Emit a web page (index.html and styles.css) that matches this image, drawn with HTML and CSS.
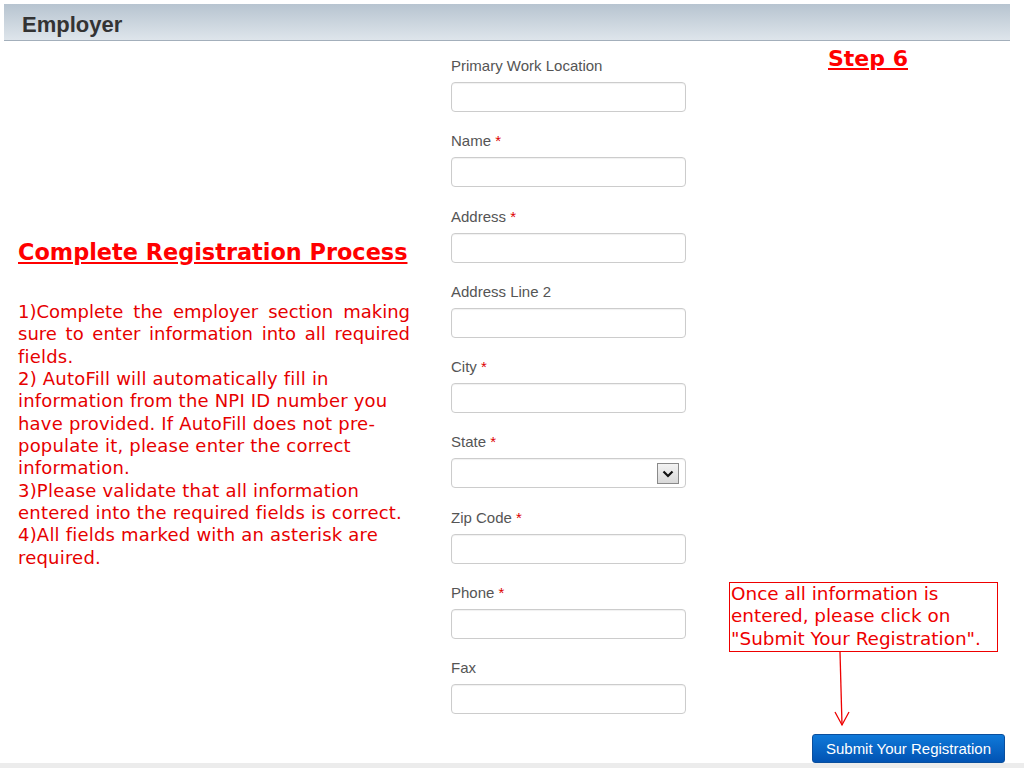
FILE: index.html
```html
<!DOCTYPE html>
<html>
<head>
<meta charset="utf-8">
<link rel="stylesheet" href="styles.css">
</head>
<body>
<div class="header"><h1 class="header-title">Employer</h1></div>
<div class="main">
  <div class="instructions">
    <h2 class="instr-title">Complete Registration Process</h2>
    <div class="instr-text">
      <div class="line just">1)Complete the employer section making</div>
      <div class="line just">sure to enter information into all required</div>
      <div class="line">fields.</div>
      <div class="line">2) AutoFill will automatically fill in</div>
      <div class="line">information from the NPI ID number you</div>
      <div class="line">have provided. If AutoFill does not pre-</div>
      <div class="line">populate it, please enter the correct</div>
      <div class="line">information.</div>
      <div class="line">3)Please validate that all information</div>
      <div class="line">entered into the required fields is correct.</div>
      <div class="line">4)All fields marked with an asterisk are</div>
      <div class="line">required.</div>
    </div>
  </div>
  <form class="form">
    <div class="field"><label class="label">Primary Work Location</label><div class="input"></div></div>
    <div class="field"><label class="label">Name <span class="req">*</span></label><div class="input"></div></div>
    <div class="field"><label class="label">Address <span class="req">*</span></label><div class="input"></div></div>
    <div class="field"><label class="label">Address Line 2</label><div class="input"></div></div>
    <div class="field"><label class="label">City <span class="req">*</span></label><div class="input"></div></div>
    <div class="field"><label class="label">State <span class="req">*</span></label>
      <div class="input select"><span class="dd"><svg width="12" height="8" viewBox="0 0 12 8"><path d="M1.5 1.5 L6 6 L10.5 1.5" fill="none" stroke="#111" stroke-width="2.2"/></svg></span></div></div>
    <div class="field"><label class="label">Zip Code <span class="req">*</span></label><div class="input"></div></div>
    <div class="field"><label class="label">Phone <span class="req">*</span></label><div class="input"></div></div>
    <div class="field"><label class="label">Fax</label><div class="input"></div></div>
  </form>
  <div class="side">
    <div class="step">Step 6</div>
    <div class="spacer"></div>
    <div class="callout">Once all information is<br>entered, please click on<br>"Submit Your Registration".</div>
    <svg class="arrow" width="40" height="82" viewBox="0 0 40 82">
      <path d="M11 0 L13 73" stroke="#e00" stroke-width="1.3" fill="none"/>
      <path d="M6 60 L13 73 L20 60" stroke="#e00" stroke-width="1.3" fill="none"/>
    </svg>
    <div class="btn">Submit Your Registration</div>
  </div>
</div>
<div class="footer"></div>
</body>
</html>
```
FILE: styles.css
```css
html, body { margin: 0; padding: 0; background: #fff; }
body { width: 1024px; height: 768px; overflow: hidden; font-family: "Liberation Sans", Arial, sans-serif; }
.header {
  margin: 4px 14px 0 4px;
  height: 37px;
  box-sizing: border-box;
  padding-top: 6px;
  background: linear-gradient(to bottom, #b7c4d0 0%, #dee5eb 100%);
  border-bottom: 1px solid #a3afbb;
  display: flex; align-items: center;
}
.header-title { margin: 0 0 0 18px; font-size: 22px; font-weight: bold; color: #333; font-family: "Liberation Sans", Arial, sans-serif; }
.main {
  height: 722px;
  display: grid;
  grid-template-columns: 392px 235px 1fr;
  column-gap: 41px;
  padding-left: 18px;
}
.main > .side { margin-left: 2px; }
.instructions { align-self: center; font-family: "DejaVu Sans", Verdana, sans-serif; color: #e60000; margin-top: 4px; }
.instr-title { margin: 0 0 36px 0; font-size: 22.4px; font-weight: bold; color: #f00; text-decoration: underline; white-space: nowrap; line-height: 26px; }
.instr-text { font-size: 18px; line-height: 22.36px; white-space: nowrap; letter-spacing: 0.2px; }
.line.just { text-align: justify; text-align-last: justify; white-space: normal; letter-spacing: 0; }
.form { padding-top: 15px; }
.field { margin-bottom: 19.25px; }
.label { display: block; font-size: 15px; line-height: 20px; color: #555; margin-bottom: 6px; }
.req { color: #d00; }
.input { box-sizing: border-box; height: 30px; border: 1px solid #ccc; border-radius: 4px; background: #fff; box-shadow: inset 0 1px 1px rgba(0,0,0,0.06); position: relative; }
.select .dd { position: absolute; right: 6px; top: 4px; width: 22px; height: 21px; box-sizing: border-box; border: 1px solid #8a8a8a; background: linear-gradient(#f3f3f3, #d9d9d9); display: flex; align-items: center; justify-content: center; }
.side { display: flex; flex-direction: column; align-items: flex-start; }
.step { margin: 5px 0 0 99px; font-family: "DejaVu Sans", Verdana, sans-serif; font-weight: bold; font-size: 22px; line-height: 26px; color: #f00; text-decoration: underline; }
.spacer { flex: 1; }
.callout { border: 1px solid #e00; color: #e00; font-family: "DejaVu Sans", Verdana, sans-serif; font-size: 18.4px; line-height: 22.5px; padding: 0 16px 1px 1px; white-space: nowrap; }
.arrow { display: block; margin-left: 100px; }
.btn { margin-left: 83px; width: 193px; height: 29px; box-sizing: border-box; border-radius: 3px; background: linear-gradient(#0f79d9, #0253b3); border: 1px solid #0a4f9e; color: #fff; font-size: 15px; display: flex; align-items: center; justify-content: center; }
.footer { height: 5px; background: #ececec; }
```
